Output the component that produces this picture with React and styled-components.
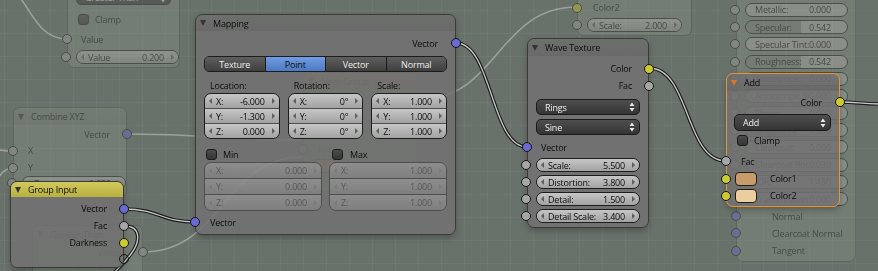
import React from "react"
import styled, { createGlobalStyle } from "styled-components"

const VEC = "#6a6ad4"
const COL = "#cccc2c"
const VAL = "#a6a6a6"

const GlobalStyle = createGlobalStyle`
    html, body {
        margin: 0;
        padding: 0;
        background: #69726a;
    }
    body {
        font-family: "Open Sans", "DejaVu Sans", sans-serif;
        font-size: 9px;
        letter-spacing: -0.2px;
        color: #0c0c0c;
    }
`

const Canvas = styled.div`
    position: relative;
    width: 878px;
    height: 271px;
    overflow: hidden;
    background-color: #69726a;
    background-image:
        linear-gradient(rgba(255, 255, 255, 0.045) 1px, transparent 1px),
        linear-gradient(90deg, rgba(255, 255, 255, 0.045) 1px, transparent 1px);
    background-size: 23px 23px;
    background-position: 4px 10px;
`

const Ghost = styled.div`
    position: absolute;
    inset: 0;
    opacity: 0.4;
    pointer-events: none;
`

const Wires = styled.svg`
    position: absolute;
    left: 0;
    top: 0;
    width: 878px;
    height: 271px;
    overflow: visible;
`

const Node = styled.div`
    position: absolute;
    left: ${p => p.$x}px;
    top: ${p => p.$y}px;
    width: ${p => p.$w}px;
    height: ${p => p.$h}px;
    box-sizing: border-box;
    display: flex;
    flex-direction: column;
    border: 1px solid ${p => (p.$selected ? "#ee922e" : p.$ghost ? "#4e574c" : "#3a3a3a")};
    border-radius: 7px;
    background: ${p => (p.$ghost ? "#858e82" : "rgba(113, 113, 113, 0.86)")};
    box-shadow: ${p => (p.$ghost ? "none" : "0 3px 6px rgba(0, 0, 0, 0.25)")};
`

const Header = styled.div`
    height: ${p => p.$h}px;
    flex-shrink: 0;
    display: flex;
    align-items: center;
    gap: 7px;
    padding-left: 4px;
    border-radius: 6px 6px 0 0;
    background: ${p => p.$bg || "linear-gradient(rgba(0,0,0,0.02), rgba(0,0,0,0.07))"};
`

const Arrow = styled.span`
    width: 0;
    height: 0;
    border-left: 3.5px solid transparent;
    border-right: 3.5px solid transparent;
    border-top: 6px solid ${p => p.$color || "#343434"};
`

const Row = styled.div`
    position: relative;
    height: ${p => p.$h || 16}px;
    flex-shrink: 0;
    margin-top: ${p => p.$mt || 0}px;
    display: flex;
    align-items: center;
    gap: ${p => p.$gap || 6}px;
    justify-content: ${p => (p.$out ? "flex-end" : "flex-start")};
    padding: ${p => (p.$out ? `0 ${p.$pad ?? 16}px 0 0` : `0 0 0 ${p.$pad ?? 14}px`)};
    white-space: nowrap;
`

const Socket = styled.span`
    position: absolute;
    top: 50%;
    ${p => (p.$side === "right" ? "right: -6px;" : "left: -6px;")}
    width: 10px;
    height: 10px;
    margin-top: -5px;
    box-sizing: border-box;
    border-radius: 50%;
    border: 1px solid #151515;
    background: ${p => p.$color || "transparent"};
`

const Section = styled.div`
    flex-shrink: 0;
    margin-top: ${p => p.$mt || 0}px;
    padding: 0 ${p => p.$right ?? 8}px 0 ${p => p.$left ?? 8}px;
    display: flex;
    flex-direction: column;
    gap: ${p => p.$gap || 0}px;
`

const Columns = styled.div`
    flex-shrink: 0;
    margin-top: ${p => p.$mt || 0}px;
    padding: 0 8px;
    display: grid;
    grid-template-columns: repeat(${p => p.$n}, 1fr);
    column-gap: ${p => p.$gap}px;
    align-items: center;
    height: ${p => (p.$h ? `${p.$h}px` : "auto")};
`

const ColLabel = styled.div`
    padding-left: 6px;
`

const Stack = styled.div`
    display: flex;
    flex-direction: column;
    border: 1px solid ${p => (p.$dim ? "#4e4e4e" : "#1d1d1d")};
    border-radius: 7px;
    overflow: hidden;
`

const Num = styled.div`
    height: ${p => p.$h || 14}px;
    display: flex;
    align-items: center;
    gap: 4px;
    padding: 0 4px;
    white-space: nowrap;
    color: ${p => (p.$dim ? "#585858" : "#0c0c0c")};
    background: ${p =>
        p.$dim
            ? "linear-gradient(rgba(168,168,168,0.5), rgba(140,140,140,0.5))"
            : "linear-gradient(#c6c6c6, #a2a2a2)"};
    & + & {
        border-top: 1px solid ${p => (p.$dim ? "#4e4e4e" : "#2b2b2b")};
    }
`

const NumLabel = styled.span`
    flex: 1;
    overflow: hidden;
`

const NumValue = styled.span`
    margin-right: 3px;
`

const Tri = styled.span`
    width: 0;
    height: 0;
    flex-shrink: 0;
    border-top: 3px solid transparent;
    border-bottom: 3px solid transparent;
    ${p => (p.$right ? "border-left" : "border-right")}: 3px solid ${p => (p.$dim ? "#7a7a7a" : "#5e5e5e")};
`

const Slider = styled.div`
    height: 14px;
    box-sizing: border-box;
    display: flex;
    align-items: center;
    padding-left: 9px;
    border: 1px solid #1d1d1d;
    border-radius: 7px;
    overflow: hidden;
    white-space: nowrap;
    background: linear-gradient(90deg, #8a8a8a ${p => p.$fill}%, #b8b8b8 ${p => p.$fill}%);
`

const SliderLabel = styled.span`
    flex: 1;
    overflow: hidden;
`

const SliderValue = styled.span`
    width: 38px;
    flex-shrink: 0;
`

const Tabs = styled.div`
    display: flex;
    height: 14px;
    border: 1px solid #1c1c1c;
    border-radius: 5px;
    overflow: hidden;
`

const Tab = styled.div`
    flex: 1;
    display: flex;
    align-items: center;
    justify-content: center;
    color: ${p => (p.$active ? "#0d0d0d" : "#ececec")};
    background: ${p =>
        p.$active ? "linear-gradient(#6f9ce2, #4c79bf)" : "linear-gradient(#5e5e5e, #3f3f3f)"};
    & + & {
        border-left: 1px solid #1c1c1c;
    }
`

const Dropdown = styled.div`
    height: ${p => p.$h || 16}px;
    box-sizing: border-box;
    display: flex;
    align-items: center;
    justify-content: space-between;
    padding: 0 4px 0 8px;
    border: 1px solid #1a1a1a;
    border-radius: 5px;
    color: #f0f0f0;
    background: linear-gradient(#4e4e4e, #343434);
`

const Check = styled.span`
    width: 11px;
    height: 11px;
    box-sizing: border-box;
    border: 1px solid #1d1d1d;
    border-radius: 3px;
    background: linear-gradient(#4c4c4c, #353535);
`

const Swatch = styled.span`
    width: 22px;
    height: 14px;
    box-sizing: border-box;
    border: 1px solid #1d1d1d;
    border-radius: 4px;
    background: ${p => p.$color};
`

const UpDown = () => (
    <svg width="6" height="10" viewBox="0 0 6 10">
        <path d="M3 0.5 L5.5 4 L0.5 4 Z M3 9.5 L5.5 6 L0.5 6 Z" fill="#e8e8e8" />
    </svg>
)

const NumRow = ({ label, value, dim, h }) => (
    <Num $dim={dim} $h={h}>
        <Tri $dim={dim} />
        <NumLabel>{label}</NumLabel>
        <NumValue>{value}</NumValue>
        <Tri $right $dim={dim} />
    </Num>
)

const NumGroup = ({ rows, dim, h }) => (
    <Stack $dim={dim}>
        {rows.map(([l, v]) => (
            <NumRow key={l} label={l} value={v} dim={dim} h={h} />
        ))}
    </Stack>
)

const Wire = ({ d }) => (
    <g fill="none">
        <path d={d} stroke="#1c1c1c" strokeWidth="3.6" />
        <path d={d} stroke="#c9c9c9" strokeWidth="1.3" />
    </g>
)

const GhostWire = ({ d }) => <path d={d} fill="none" stroke="#e6e6e6" strokeWidth="1.6" />

const principled = [
    ["Subsurface:", "0.000", 0],
    ["Metallic:", "0.000", 0],
    ["Specular:", "0.542", 54],
    ["Specular Tint:", "0.000", 0],
    ["Roughness:", "0.542", 54],
    ["Anisotropic:", "0.000", 0],
    ["Anisotropic Rotation:", "0.000", 0],
    ["Sheen:", "0.000", 0],
    ["Sheen Tint:", "0.500", 50],
    ["Clearcoat:", "0.000", 0],
    ["Clearcoat Roughness:", "0.030", 3],
    ["IOR:", "1.450", 0],
    ["Transmission:", "0.000", 0],
]

const MappingNode = () => (
    <Node $x={195} $y={14} $w={261} $h={221}>
        <Header $h={16}>
            <Arrow />
            Mapping
        </Header>
        <Row $out $mt={4} $h={16} $pad={17}>
            Vector
            <Socket $side="right" $color={VEC} />
        </Row>
        <Section $mt={5}>
            <Tabs>
                <Tab>Texture</Tab>
                <Tab $active>Point</Tab>
                <Tab>Vector</Tab>
                <Tab>Normal</Tab>
            </Tabs>
        </Section>
        <Columns $n={3} $gap={8} $mt={6} $h={14}>
            <ColLabel>Location:</ColLabel>
            <ColLabel>Rotation:</ColLabel>
            <ColLabel>Scale:</ColLabel>
        </Columns>
        <Columns $n={3} $gap={8} $mt={1}>
            <NumGroup rows={[["X:", "-6.000"], ["Y:", "-1.300"], ["Z:", "0.000"]]} />
            <NumGroup rows={[["X:", "0°"], ["Y:", "0°"], ["Z:", "0°"]]} />
            <NumGroup rows={[["X:", "1.000"], ["Y:", "1.000"], ["Z:", "1.000"]]} />
        </Columns>
        <Columns $n={2} $gap={7} $mt={7} $h={14}>
            <Row $pad={2} $gap={6}>
                <Check />
                Min
            </Row>
            <Row $pad={3} $gap={7}>
                <Check />
                Max
            </Row>
        </Columns>
        <Columns $n={2} $gap={7} $mt={2}>
            <NumGroup dim h={15} rows={[["X:", "0.000"], ["Y:", "0.000"], ["Z:", "0.000"]]} />
            <NumGroup dim h={15} rows={[["X:", "1.000"], ["Y:", "1.000"], ["Z:", "1.000"]]} />
        </Columns>
        <Row $mt={4} $h={14} $pad={14}>
            <Socket $color={VEC} />
            Vector
        </Row>
    </Node>
)

const WaveNode = () => (
    <Node $x={527} $y={38} $w={122} $h={190}>
        <Header $h={17}>
            <Arrow />
            Wave Texture
        </Header>
        <Row $out $mt={4} $h={17} $pad={16}>
            Color
            <Socket $side="right" $color={COL} />
        </Row>
        <Row $out $h={17} $pad={16}>
            Fac
            <Socket $side="right" $color={VAL} />
        </Row>
        <Section $mt={5} $gap={4}>
            <Dropdown>
                Rings
                <UpDown />
            </Dropdown>
            <Dropdown>
                Sine
                <UpDown />
            </Dropdown>
        </Section>
        <Row $mt={5} $h={14} $pad={13}>
            <Socket $color={VEC} />
            Vector
        </Row>
        <Section $mt={4} $gap={3}>
            {[["Scale:", "5.500"], ["Distortion:", "3.800"], ["Detail:", "1.500"], ["Detail Scale:", "3.400"]].map(([l, v]) => (
                <Row key={l} $h={14} $pad={0}>
                    <Socket style={{ left: -15 }} $color={VAL} />
                    <Stack style={{ flex: 1 }}>
                        <NumRow label={l} value={v} h={12} />
                    </Stack>
                </Row>
            ))}
        </Section>
    </Node>
)

const GroupInputNode = () => (
    <Node $x={10} $y={181} $w={114} $h={87}>
        <Header $h={15} $bg="linear-gradient(rgba(214,206,90,0.95), rgba(187,179,61,0.95))">
            <Arrow />
            Group Input
        </Header>
        <Row $out $mt={3} $h={17}>
            Vector
            <Socket $side="right" $color={VEC} />
        </Row>
        <Row $out $h={17}>
            Fac
            <Socket $side="right" $color={VAL} />
        </Row>
        <Row $out $h={17}>
            Darkness
            <Socket $side="right" $color={COL} />
        </Row>
        <Row $out $h={16}>
            <Socket $side="right" />
        </Row>
    </Node>
)

const AddNode = () => (
    <Node $x={726} $y={73} $w={114} $h={134} $selected>
        <Header $h={17}>
            <Arrow $color="#e0761e" />
            Add
        </Header>
        <Row $out $mt={3} $h={16} $pad={17}>
            Color
            <Socket $side="right" $color={COL} />
        </Row>
        <Section $mt={4} $left={7} $right={8}>
            <Dropdown $h={17}>
                Add
                <UpDown />
            </Dropdown>
        </Section>
        <Row $mt={3} $h={13} $pad={10}>
            <Check />
            Clamp
        </Row>
        <Row $mt={6} $h={16} $pad={14}>
            <Socket $color={VAL} />
            Fac
        </Row>
        <Row $mt={1} $h={17} $pad={8} $gap={13}>
            <Socket $color={COL} />
            <Swatch $color="#c69c6a" />
            Color1
        </Row>
        <Row $h={17} $pad={8} $gap={13}>
            <Socket $color={COL} />
            <Swatch $color="#eccd9e" />
            Color2
        </Row>
    </Node>
)

const GhostNodes = () => (
    <Ghost>
        <Wires viewBox="0 0 878 271">
            <GhostWire d="M-20 -25 C 30 -25, 25 39, 67 39" />
            <GhostWire d="M-20 149 C 0 149, 0 151, 13 151" />
            <GhostWire d="M-30 200 C -5 200, -5 168, 13 168" />
            <GhostWire d="M127 134 C 215 134, 215 140, 303 140" />
            <GhostWire d="M143 252 C 223 252, 223 157, 303 157" />
            <GhostWire d="M418 100 C 498 100, 497 7, 577 7" />
        </Wires>

        <Node $ghost $x={67} $y={-30} $w={113} $h={98}>
            <Header $h={16}>
                <Arrow />
                Math
            </Header>
            <Section $mt={3} $left={8}>
                <Dropdown $h={15}>
                    Greater Than
                    <UpDown />
                </Dropdown>
            </Section>
            <Row $mt={6} $h={16} $pad={10}>
                <Check />
                Clamp
            </Row>
            <Row $mt={4} $h={16} $pad={13}>
                <Socket $color={VAL} />
                Value
            </Row>
            <Row $mt={3} $h={14} $pad={8}>
                <Socket style={{ left: -7 }} $color={VAL} />
                <Stack style={{ flex: 1 }}>
                    <NumRow label="Value" value="0.200" h={12} />
                </Stack>
            </Row>
        </Node>

        <Node $ghost $x={13} $y={107} $w={114} $h={90}>
            <Header $h={17}>
                <Arrow />
                Combine XYZ
            </Header>
            <Row $out $mt={1} $h={16}>
                Vector
                <Socket $side="right" $color={VEC} />
            </Row>
            <Row $h={17} $pad={14}>
                <Socket $color={VAL} />X
            </Row>
            <Row $h={17} $pad={14}>
                <Socket $color={VAL} />Y
            </Row>
            <Row $h={14} $pad={8}>
                <Socket style={{ left: -7 }} $color={VAL} />
                <Stack style={{ flex: 1 }}>
                    <NumRow label="Z:" value="0.838" h={12} />
                </Stack>
            </Row>
        </Node>

        <Node $ghost $x={32} $y={225} $w={111} $h={60}>
            <Header $h={16}>
                <Arrow />
                Greater Than
            </Header>
            <Row $out $mt={2} $h={16} $pad={22}>
                Value
                <Socket $side="right" $color={VAL} />
            </Row>
        </Node>

        <Node $ghost $x={303} $y={72} $w={115} $h={120}>
            <Header $h={16} $bg="linear-gradient(#c89a5a, #a8773e)">
                <Arrow />
                NodeGroup
            </Header>
            <Row $out $mt={6} $h={16}>
                Color
                <Socket $side="right" $color={COL} />
            </Row>
            <Row $mt={30} $h={16} $pad={14}>
                <Socket $color={VAL} />
                Fac
            </Row>
            <Row $h={18} $pad={10}>
                <Socket $color={COL} />
                <Swatch $color="#d8b04a" />
            </Row>
        </Node>

        <Node $ghost $x={577} $y={-19} $w={115} $h={55}>
            <Row $h={17} $pad={15}>
                <Socket $color={COL} />
                Color1
            </Row>
            <Row $h={17} $pad={15}>
                <Socket $color={COL} />
                Color2
            </Row>
            <Row $mt={2} $h={14} $pad={9}>
                <Socket style={{ left: -6 }} $color={VAL} />
                <Stack style={{ flex: 1, marginRight: 9 }}>
                    <NumRow label="Scale:" value="2.000" h={12} />
                </Stack>
            </Row>
        </Node>

        <Node $ghost $x={736} $y={-20} $w={120} $h={282}>
            <Section $mt={3.2} $left={8} $right={7}>
                {principled.map(([l, v, f]) => (
                    <Row key={l} $h={17.2} $pad={0}>
                        <Socket style={{ left: -15 }} $color={VAL} />
                        <Slider $fill={f} style={{ flex: 1 }}>
                            <SliderLabel>{l}</SliderLabel>
                            <SliderValue>{v}</SliderValue>
                        </Slider>
                    </Row>
                ))}
            </Section>
            {["Normal", "Clearcoat Normal", "Tangent"].map(l => (
                <Row key={l} $h={17.2} $pad={35}>
                    <Socket $color={VEC} />
                    {l}
                </Row>
            ))}
        </Node>
    </Ghost>
)

const App = () => {
    return (
        <>
            <GlobalStyle />
            <Canvas>
                <GhostNodes />
                <Wires viewBox="0 0 878 271">
                    <Wire d="M124 209 C 160 209, 160 222, 196 222" />
                    <Wire d="M124 226 C 142 226, 140 242, 131 254 S 118 268, 111 276" />
                    <Wire d="M456 43 C 492 43, 491 147, 527 147" />
                    <Wire d="M649 68 C 690 68, 685 161, 726 161" />
                    <Wire d="M840 102 C 858 102, 860 104, 880 104" />
                </Wires>
                <MappingNode />
                <WaveNode />
                <GroupInputNode />
                <AddNode />
            </Canvas>
        </>
    )
}

export default App
